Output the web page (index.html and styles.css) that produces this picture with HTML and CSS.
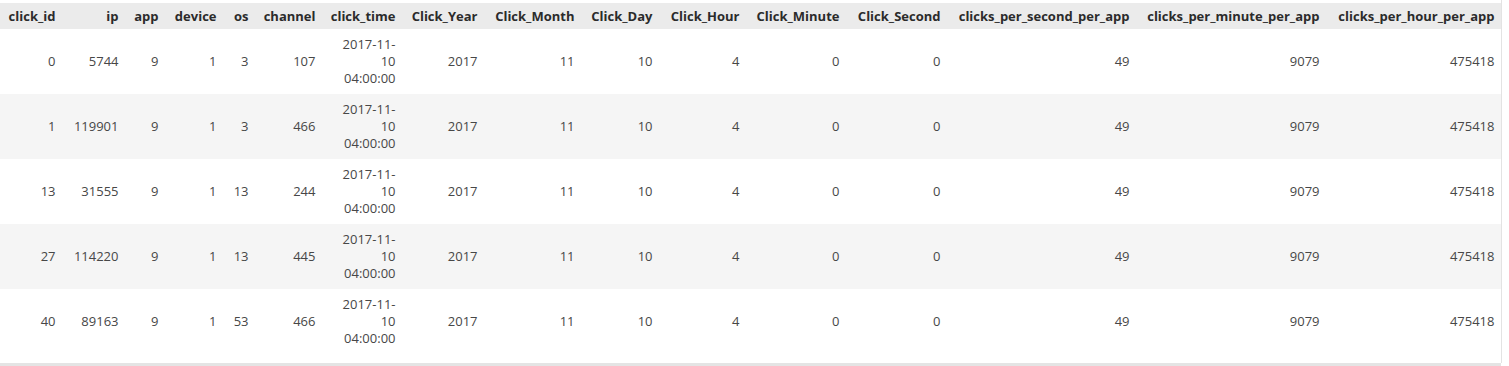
FILE: index.html
```html
<!DOCTYPE html>
<html>
<head>
<meta charset="utf-8">
<link rel="stylesheet" href="styles.css">
</head>
<body>
<div class="output">
  <div class="scroller">
    <table class="dataframe">
      <colgroup>
        <col class="c0"><col class="c1"><col class="c2"><col class="c3"><col class="c4"><col class="c5"><col class="c6"><col class="c7"><col class="c8"><col class="c9"><col class="c10"><col class="c11"><col class="c12"><col class="c13"><col class="c14"><col class="c15">
      </colgroup>
      <thead>
        <tr>
          <th>click_id</th><th>ip</th><th>app</th><th>device</th><th>os</th><th>channel</th><th>click_time</th><th>Click_Year</th><th>Click_Month</th><th>Click_Day</th><th>Click_Hour</th><th>Click_Minute</th><th>Click_Second</th><th>clicks_per_second_per_app</th><th>clicks_per_minute_per_app</th><th>clicks_per_hour_per_app</th>
        </tr>
      </thead>
      <tbody>
        <tr>
          <td>0</td><td>5744</td><td>9</td><td>1</td><td>3</td><td>107</td><td><span class="dt">2017-11-<wbr>10 04:00:00</span></td><td>2017</td><td>11</td><td>10</td><td>4</td><td>0</td><td>0</td><td>49</td><td>9079</td><td>475418</td>
        </tr>
        <tr>
          <td>1</td><td>119901</td><td>9</td><td>1</td><td>3</td><td>466</td><td><span class="dt">2017-11-<wbr>10 04:00:00</span></td><td>2017</td><td>11</td><td>10</td><td>4</td><td>0</td><td>0</td><td>49</td><td>9079</td><td>475418</td>
        </tr>
        <tr>
          <td>13</td><td>31555</td><td>9</td><td>1</td><td>13</td><td>244</td><td><span class="dt">2017-11-<wbr>10 04:00:00</span></td><td>2017</td><td>11</td><td>10</td><td>4</td><td>0</td><td>0</td><td>49</td><td>9079</td><td>475418</td>
        </tr>
        <tr>
          <td>27</td><td>114220</td><td>9</td><td>1</td><td>13</td><td>445</td><td><span class="dt">2017-11-<wbr>10 04:00:00</span></td><td>2017</td><td>11</td><td>10</td><td>4</td><td>0</td><td>0</td><td>49</td><td>9079</td><td>475418</td>
        </tr>
        <tr>
          <td>40</td><td>89163</td><td>9</td><td>1</td><td>53</td><td>466</td><td><span class="dt">2017-11-<wbr>10 04:00:00</span></td><td>2017</td><td>11</td><td>10</td><td>4</td><td>0</td><td>0</td><td>49</td><td>9079</td><td>475418</td>
        </tr>
      </tbody>
    </table>
  </div>
  <div class="hbar"></div>
</div>
</body>
</html>
```
FILE: styles.css
```css
html, body {
  margin: 0;
  padding: 0;
  background: #ffffff;
}

body {
  font-family: "Open Sans", "Noto Sans", "Liberation Sans", sans-serif;
  font-size: 13px;
  color: #474747;
}

.output {
  width: 1503px;
}

.scroller {
  width: 1502px;
  height: 363px;
  border-right: 1px solid #e3e3e3;
  box-sizing: border-box;
  padding-top: 3px;
}

.hbar {
  width: 1501px;
  height: 3px;
  background: #e4e4e4;
}

.dataframe {
  table-layout: fixed;
  width: 1501px;
  border-collapse: collapse;
  border-spacing: 0;
}

.dataframe th,
.dataframe td {
  text-align: right;
  vertical-align: middle;
  padding: 0 6.5px;
  white-space: normal;
  border: none;
}

.dataframe thead tr {
  background: #ebebeb;
}

.dataframe th {
  font-weight: 700;
  color: #2b2b2b;
  line-height: 18px;
  padding-top: 4px;
  padding-bottom: 4px;
  white-space: nowrap;
  letter-spacing: 0;
}

.dataframe td {
  line-height: 17px;
  padding-top: 7px;
  padding-bottom: 7px;
  height: 51px;
}

.dataframe tbody tr:nth-child(even) {
  background: #f5f5f5;
}

.dt {
  display: inline-block;
  max-width: 60px;
  text-align: right;
}

.c0 { width: 62px; }
.c1 { width: 63px; }
.c2 { width: 40px; }
.c3 { width: 58px; }
.c4 { width: 32px; }
.c5 { width: 67px; }
.c6 { width: 80px; }
.c7 { width: 82px; }
.c8 { width: 97px; }
.c9 { width: 78px; }
.c10 { width: 87px; }
.c11 { width: 100px; }
.c12 { width: 101px; }
.c13 { width: 189px; }
.c14 { width: 190px; }
.c15 { width: 175px; }
```
